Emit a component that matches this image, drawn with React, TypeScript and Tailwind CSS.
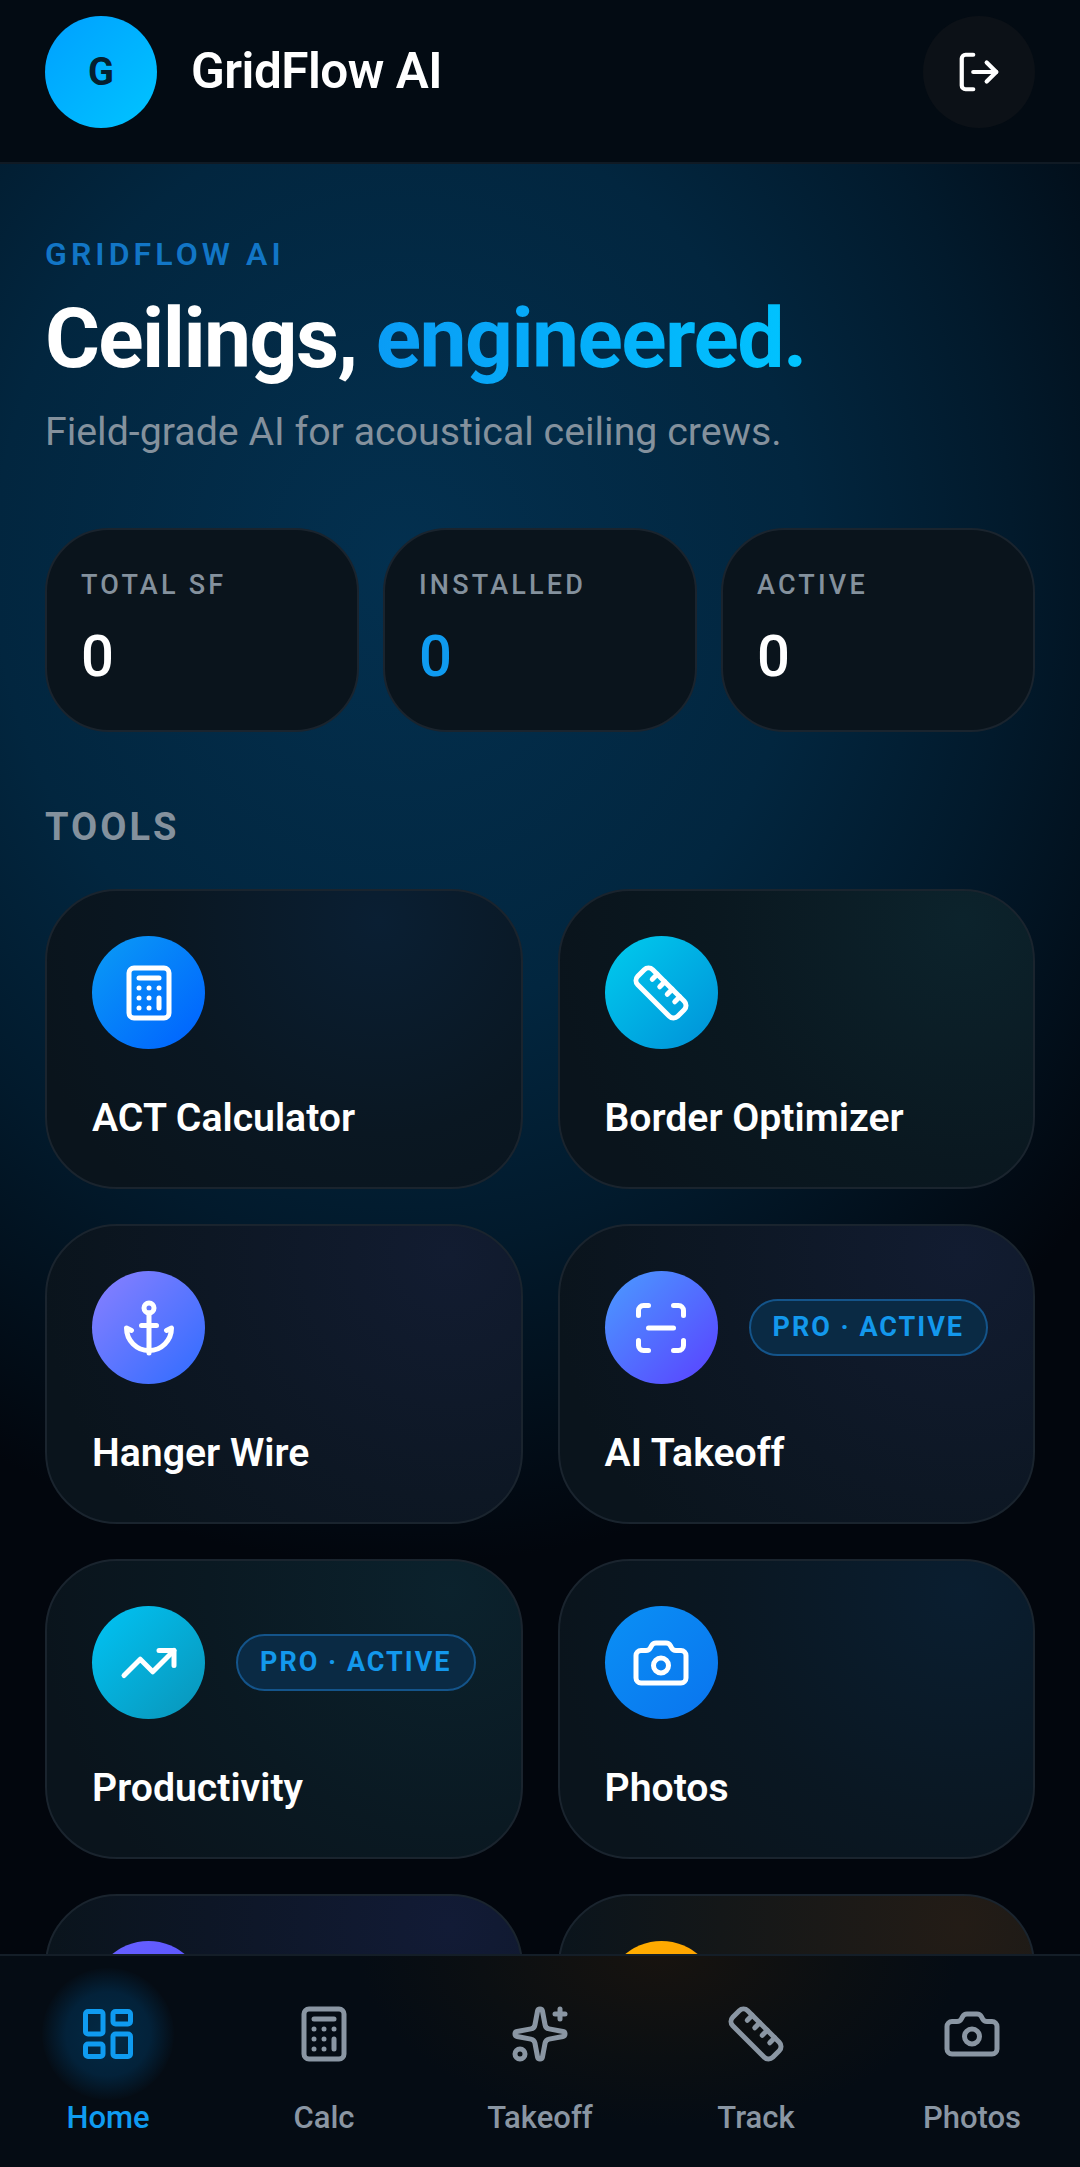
import {
  Anchor,
  Calculator,
  Camera,
  LayoutDashboard,
  LogOut,
  Ruler,
  ScanLine,
  Sparkles,
  TrendingUp,
} from "lucide-react";

const stats = [
  { label: "TOTAL SF", value: "0", color: "text-white" },
  { label: "INSTALLED", value: "0", color: "text-[#0f9bf0]" },
  { label: "ACTIVE", value: "0", color: "text-white" },
];

const tools = [
  { title: "ACT Calculator", Icon: Calculator, disc: "bg-[linear-gradient(135deg,#0a9cf5,#0060ff)]", tint: "bg-[radial-gradient(circle_at_70%_10%,#0a1f33_0%,#0a1722_50%,#0a141c_85%)]" },
  { title: "Border Optimizer", Icon: Ruler, disc: "bg-[linear-gradient(135deg,#00ccee,#0090d8)]", tint: "bg-[radial-gradient(circle_at_85%_10%,#0c232c_0%,#0a1820_50%,#0a141c_85%)]" },
  { title: "Hanger Wire", Icon: Anchor, disc: "bg-[linear-gradient(135deg,#8a80ff,#2f6cff)]", tint: "bg-[radial-gradient(circle_at_85%_10%,#121c31_0%,#0d1724_50%,#0a141c_85%)]" },
  { title: "AI Takeoff", Icon: ScanLine, pro: true, disc: "bg-[linear-gradient(135deg,#4a9cff,#5a40ff)]", tint: "bg-[radial-gradient(circle_at_85%_10%,#121c31_0%,#0d1724_50%,#0a141c_85%)]" },
  { title: "Productivity", Icon: TrendingUp, pro: true, disc: "bg-[linear-gradient(135deg,#00c4f5,#0a94b8)]", tint: "bg-[radial-gradient(circle_at_85%_10%,#0b222d_0%,#0a1922_50%,#0a141c_85%)]" },
  { title: "Photos", Icon: Camera, disc: "bg-[linear-gradient(135deg,#0a90f5,#0a74ee)]", tint: "bg-[radial-gradient(circle_at_85%_10%,#0a1e30_0%,#0a1722_50%,#0a141c_85%)]" },
  // last row is cut off by the nav, only the top of the disc shows
  { disc: "bg-[linear-gradient(135deg,#6a62ff,#4f4cff)]", tint: "bg-[radial-gradient(circle_at_85%_10%,#121b36_0%,#0d1626_50%,#0a141c_85%)]" },
  { disc: "bg-[linear-gradient(135deg,#ffb000,#ff9800)]", tint: "bg-[radial-gradient(circle_at_85%_10%,#231c16_0%,#141718_50%,#0a141c_85%)]" },
];

const nav = [
  { label: "Home", Icon: LayoutDashboard, active: true },
  { label: "Calc", Icon: Calculator },
  { label: "Takeoff", Icon: Sparkles },
  { label: "Track", Icon: Ruler },
  { label: "Photos", Icon: Camera },
];

export default function App() {
  return (
    <div className="relative h-[2167px] w-[1080px] overflow-hidden bg-[#02060d] font-['Roboto',sans-serif] text-white">
      {/* Header */}
      <header className="flex h-[164px] items-start justify-between border-b-2 border-[#101a24] bg-[#030b13] px-[45px] pt-4">
        <div className="flex items-center gap-[34px]">
          <div className="flex h-28 w-28 items-center justify-center rounded-full bg-[linear-gradient(135deg,#00a0ff,#00c4ff)] text-[38px] font-bold text-[#04202f]">
            G
          </div>
          <span className="text-[49.5px] font-semibold leading-none tracking-[-0.5px]">GridFlow AI</span>
        </div>
        <button className="flex h-28 w-28 items-center justify-center rounded-full bg-[#0c1117]">
          <LogOut size={46} strokeWidth={2.2} />
        </button>
      </header>

      <main className="h-[2003px] bg-[radial-gradient(ellipse_900px_1000px_at_400px_400px,#03304f_0%,#02263f_45%,#021a2c_68%,#02060d_100%)] px-[45px] pt-[72px]">
        {/* Hero */}
        <p className="text-[32px] font-semibold leading-9 tracking-[4.1px] text-[#1276c6]">GRIDFLOW AI</p>
        <h1 className="mt-[23px] text-[84px] font-bold leading-[88px] tracking-[-1.6px] text-white">
          Ceilings,{" "}
          <span className="bg-[linear-gradient(90deg,#0a9cf5,#00c4ff)] bg-clip-text text-transparent">engineered.</span>
        </h1>
        <p className="mt-[24px] text-[39.3px] leading-[50px] text-[#84919d]">Field-grade AI for acoustical ceiling crews.</p>

        {/* Stats */}
        <div className="mt-[71px] grid grid-cols-3 gap-[24px]">
          {stats.map((s) => (
            <div key={s.label} className="h-[204px] rounded-[64px] border-2 border-[#1a242e] bg-[#0a141c] px-[34px] pt-[39px]">
              <p className="text-[27px] font-medium leading-8 tracking-[3.2px] text-[#84919d]">{s.label}</p>
              <p className={`mt-[21px] text-[58px] font-medium leading-[68px] ${s.color}`}>{s.value}</p>
            </div>
          ))}
        </div>

        {/* Tools */}
        <h2 className="mt-[73px] text-[38px] font-bold leading-[44px] tracking-[3px] text-[#84919d]">TOOLS</h2>
        <div className="mt-[40px] grid grid-cols-2 gap-x-[35px] gap-y-[35px]">
          {tools.map((t, i) => (
            <div key={i} className={`h-[300px] rounded-[72px] border-2 border-[#1a242e] p-[45px] ${t.tint}`}>
              <div className="flex items-center gap-[31px]">
                <div className={`flex h-[113px] w-[113px] shrink-0 items-center justify-center rounded-full ${t.disc}`}>
                  {t.Icon && <t.Icon size={60} strokeWidth={2} className="text-white" />}
                </div>
                {t.pro && (
                  <span className="flex h-[57px] items-center whitespace-nowrap rounded-full border-2 border-[#14548a] bg-[#0a2a44] px-[22px] text-[27px] font-bold tracking-[2px] text-[#1398ec]">
                    PRO · ACTIVE
                  </span>
                )}
              </div>
              {t.title && <p className="mt-[46px] text-[39.2px] font-semibold leading-[46px] text-white">{t.title}</p>}
            </div>
          ))}
        </div>
      </main>

      {/* Bottom nav */}
      <nav className="absolute inset-x-0 bottom-0 grid h-[213px] grid-cols-5 border-t-2 border-[#141e28] bg-[radial-gradient(ellipse_300px_170px_at_660px_0px,#17130f_0%,#0b0f12_60%,transparent_100%)] bg-[#050c14]">
        {nav.map(({ label, Icon, active }) => (
          <div key={label} className="flex flex-col items-center pt-[48px]">
            <div className="relative flex h-[60px] w-[60px] items-center justify-center">
              {active && <div className="absolute -inset-[36px] rounded-full bg-[radial-gradient(circle,#032a45_0%,#03223a_45%,transparent_72%)]" />}
              <Icon size={60} strokeWidth={2} className={`relative ${active ? "text-[#0f9bf0]" : "text-[#8a96a3]"}`} />
            </div>
            <span className={`mt-[36px] text-[31px] font-medium leading-9 ${active ? "text-[#0f9bf0]" : "text-[#8a96a3]"}`}>{label}</span>
          </div>
        ))}
      </nav>
    </div>
  );
}
